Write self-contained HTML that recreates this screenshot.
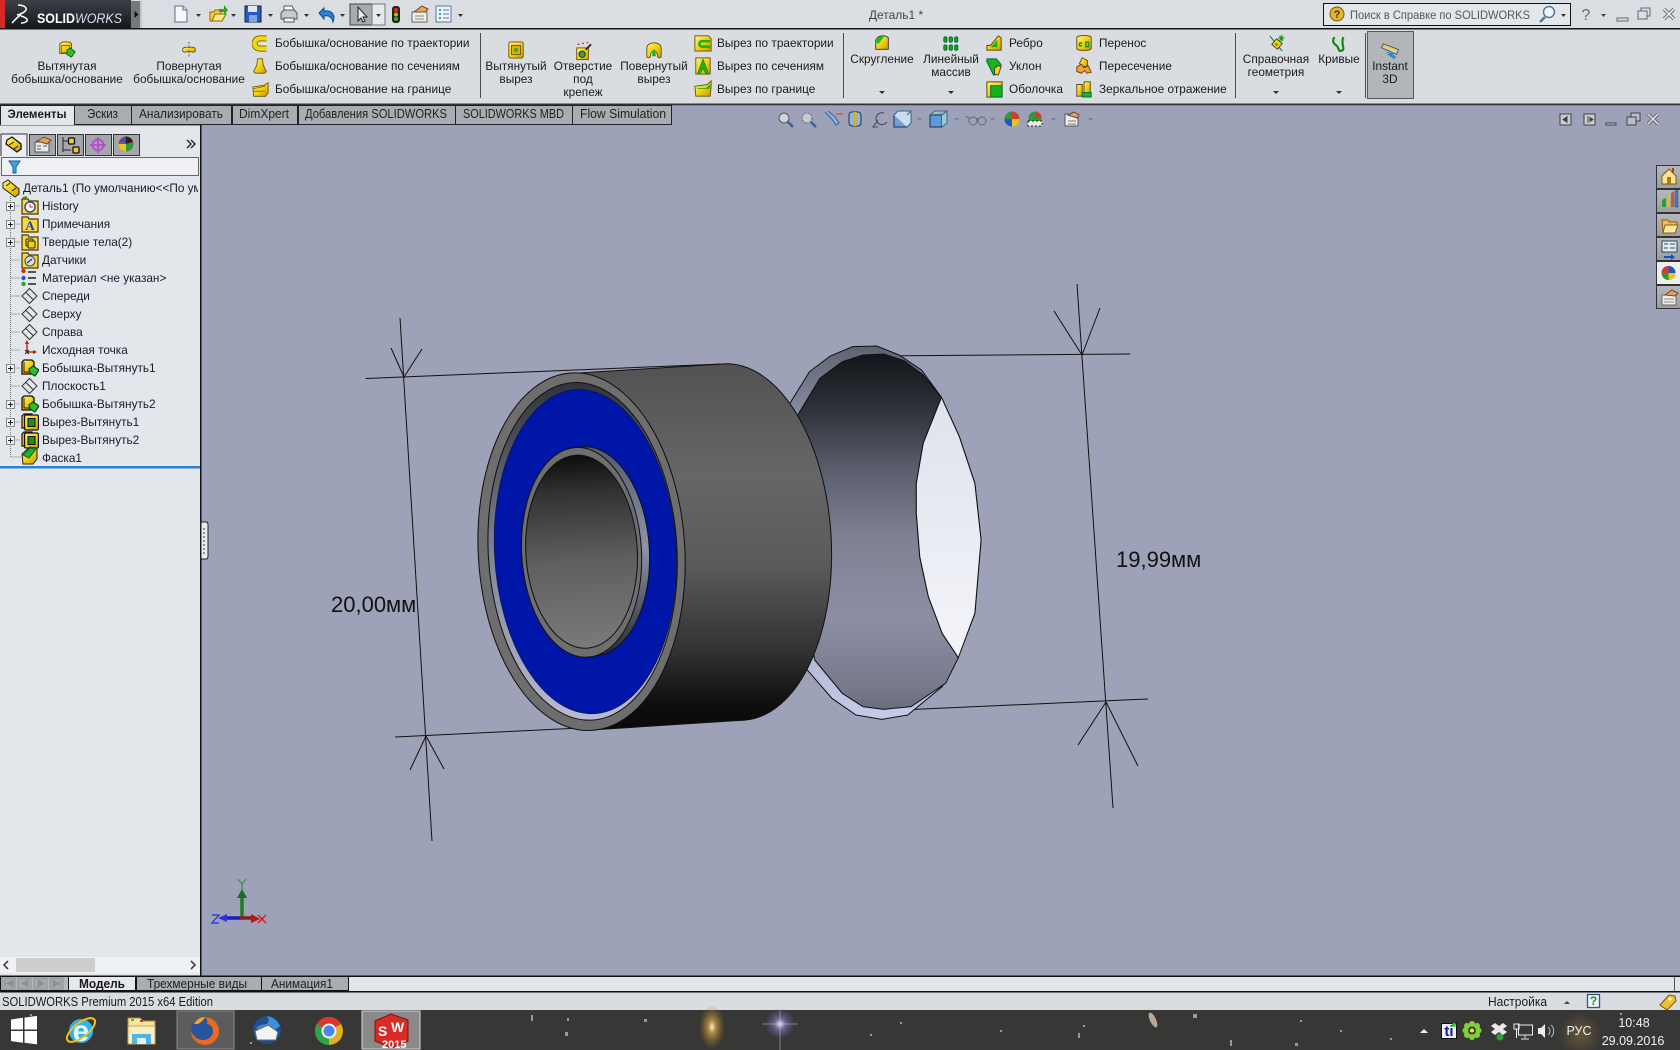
<!DOCTYPE html>
<html><head><meta charset="utf-8"><title>SOLIDWORKS</title>
<style>
html,body{margin:0;padding:0;background:#9da2b9;width:1680px;height:1050px;overflow:hidden}
svg{display:block;position:absolute;left:0;top:0}
text{font-family:"Liberation Sans","DejaVu Sans",sans-serif;font-size:12px;fill:#1a1a1a}
.m{text-anchor:middle}
.tab{font-size:12.5px;fill:#222}
.t{font-size:11.8px;fill:#1a1a2a}
.r{font-size:11.8px;letter-spacing:.03px}
.d{font-size:22px;fill:#111}
.w{fill:#f2f2f2}
.arr{fill:#333}
</style></head><body>
<svg width="1680" height="1050" viewBox="0 0 1680 1050" xmlns="http://www.w3.org/2000/svg">
<defs>
<clipPath id="sideclip"><rect x="0" y="176" width="198" height="300"/></clipPath>
<linearGradient id="logo" x1="0" y1="0" x2="0" y2="1"><stop offset="0" stop-color="#3c4148"/><stop offset="1" stop-color="#16181c"/></linearGradient>
<linearGradient id="yel" x1="0" y1="0" x2="1" y2="1"><stop offset="0" stop-color="#fff48a"/><stop offset=".5" stop-color="#f3d110"/><stop offset="1" stop-color="#c79a00"/></linearGradient>
<linearGradient id="body" x1="0" y1="0" x2="0" y2="1"><stop offset="0" stop-color="#525252"/><stop offset=".3" stop-color="#666"/><stop offset=".55" stop-color="#5a5a5a"/><stop offset=".78" stop-color="#333"/><stop offset=".93" stop-color="#0e0e0e"/><stop offset="1" stop-color="#0a0a0a"/></linearGradient>
<linearGradient id="rim" x1="0" y1="0" x2="0" y2="1"><stop offset="0" stop-color="#5f6370"/><stop offset=".2" stop-color="#8b90a6"/><stop offset=".7" stop-color="#a5aac4"/><stop offset="1" stop-color="#c6cce8"/></linearGradient>
<linearGradient id="inn" x1="0" y1="0" x2="0" y2="1"><stop offset="0" stop-color="#13151a"/><stop offset=".15" stop-color="#2e3038"/><stop offset=".33" stop-color="#5c5f6e"/><stop offset=".52" stop-color="#7f8294"/><stop offset=".75" stop-color="#8c8fa4"/><stop offset=".95" stop-color="#75788a"/><stop offset="1" stop-color="#6a6d7e"/></linearGradient>
<linearGradient id="wh" x1="0" y1="0" x2="0" y2="1"><stop offset="0" stop-color="#dfe2ed"/><stop offset="1" stop-color="#f4f5f9"/></linearGradient>
<linearGradient id="hole" x1="0" y1="0" x2="0" y2="1"><stop offset="0" stop-color="#0c0c0c"/><stop offset=".2" stop-color="#333"/><stop offset=".55" stop-color="#5f5f5f"/><stop offset="1" stop-color="#7a7a7a"/></linearGradient>
<linearGradient id="groove" x1="0" y1="0" x2="0" y2="1"><stop offset="0" stop-color="#32343c"/><stop offset=".5" stop-color="#808499"/><stop offset="1" stop-color="#b8bcd2"/></linearGradient>
<linearGradient id="tube" x1="0" y1="0" x2="0" y2="1"><stop offset="0" stop-color="#55586a"/><stop offset=".5" stop-color="#8f93aa"/><stop offset="1" stop-color="#2a2b33"/></linearGradient>
<radialGradient id="glow"><stop offset="0" stop-color="#a9824a" stop-opacity=".4"/><stop offset="1" stop-color="#a9824a" stop-opacity="0"/></radialGradient>
<radialGradient id="gold"><stop offset="0" stop-color="#fff6d0"/><stop offset=".3" stop-color="#c79a4a" stop-opacity=".8"/><stop offset="1" stop-color="#a07020" stop-opacity="0"/></radialGradient>
<radialGradient id="blu"><stop offset="0" stop-color="#f4eaf6"/><stop offset=".35" stop-color="#8f8cc0" stop-opacity=".6"/><stop offset="1" stop-color="#5050a0" stop-opacity="0"/></radialGradient>
<linearGradient id="btn" x1="0" y1="0" x2="0" y2="1"><stop offset="0" stop-color="#b5b8bd"/><stop offset="1" stop-color="#9a9da2"/></linearGradient>

<symbol id="yboss" viewBox="0 0 20 20"><path d="M2 3l3-2h8l2 2v11H2z" fill="url(#yel)" stroke="#6b5200"/><path d="M4 5h9v8H4z" fill="none" stroke="#8a6a00"/><path d="M10 10l4-2 5 4-4 6-5-3z" fill="#2cc12c" stroke="#0a5a0a"/></symbol>
<symbol id="yrev" viewBox="0 0 20 20"><path d="M10 0v20" stroke="#222" stroke-dasharray="2 2"/><path d="M2 10c0-4 5-4 8-3 3-1 8-1 8 3s-5 3-8 1c-3 2-8 3-8-1z" fill="url(#yel)" stroke="#5b4500"/></symbol>
<symbol id="ysweep" viewBox="0 0 20 20"><path d="M17 4H9a6 6 0 0 0 0 12h8" fill="none" stroke="#7a5d00" stroke-width="7"/><path d="M17 4H9a6 6 0 0 0 0 12h8" fill="none" stroke="#f5d514" stroke-width="5"/><path d="M17 9H10v2h7" fill="#fff7a0"/></symbol>
<symbol id="yloft" viewBox="0 0 20 20"><path d="M7 1h6l1 8 4 8-2 2H4l-2-2 4-8z" fill="url(#yel)" stroke="#6b5200"/></symbol>
<symbol id="ybound" viewBox="0 0 20 20"><path d="M1 7l13-2 5-3v12l-3 4H2z" fill="url(#yel)" stroke="#6b5200"/><path d="M2 9l14-3M2 12h14" stroke="#8a6a00" fill="none"/></symbol>
<symbol id="ycut" viewBox="0 0 20 20"><rect x="2" y="1" width="16" height="18" rx="2" fill="url(#yel)" stroke="#6b5200"/><rect x="5" y="5" width="10" height="10" fill="#e0b200" stroke="#6b5200"/><rect x="8" y="8" width="4" height="4" fill="#2ca82c"/></symbol>
<symbol id="yhole" viewBox="0 0 20 20"><rect x="3" y="6" width="13" height="13" fill="url(#yel)" stroke="#6b5200"/><circle cx="9" cy="13" r="3.5" fill="#3f9e3f" stroke="#222"/><path d="M13 8l6-6" stroke="#222" stroke-width="2"/><path d="M4 2h2M9 1h2M14 0h2" stroke="#d22" stroke-width="1.5"/></symbol>
<symbol id="yrcut" viewBox="0 0 20 20"><path d="M2 8c0-8 16-8 16 0v9c0 2-4 2-4 0 0-8-8-8-8 0 0 2-4 2-4 0z" fill="url(#yel)" stroke="#6b5200"/><path d="M8 17c0-5 1-8 2-8s2 3 2 8z" fill="#1db31d"/></symbol>
<symbol id="ycsw" viewBox="0 0 20 20"><path d="M1 2h15l3 3v14H1z" fill="url(#yel)" stroke="#6b5200"/><path d="M18 8h-9a3 3 0 0 0 0 6h9" fill="none" stroke="#1db31d" stroke-width="3"/></symbol>
<symbol id="yclo" viewBox="0 0 20 20"><rect x="2" y="1" width="16" height="18" fill="url(#yel)" stroke="#6b5200"/><path d="M10 2l3 8 3 8h-3l-3-5-3 5H4l3-8z" fill="#1db31d" stroke="#0a5a0a" stroke-width=".5"/></symbol>
<symbol id="ycb" viewBox="0 0 20 20"><path d="M1 7l14-2 4-4v6l-1 11H2z" fill="url(#yel)" stroke="#6b5200"/><path d="M3 9l10 0 6-5-2 6H5z" fill="#1db31d"/></symbol>
<symbol id="fil" viewBox="0 0 20 20"><path d="M3 7c2-5 9-7 14-3v13H3z" fill="url(#yel)" stroke="#333"/><path d="M3 9c2-5 6-8 10-7l-7 9z" fill="#1dbb1d"/></symbol>
<symbol id="pat" viewBox="0 0 20 20"><g fill="#18a418" stroke="#063"><rect x="2" y="2" width="3.6" height="6" rx="1.6"/><rect x="8" y="2" width="3.6" height="6" rx="1.6"/><rect x="14" y="2" width="3.6" height="6" rx="1.6"/><rect x="2" y="11" width="3.6" height="6" rx="1.6"/><rect x="8" y="11" width="3.6" height="6" rx="1.6"/><rect x="14" y="11" width="3.6" height="6" rx="1.6"/></g></symbol>
<symbol id="rib" viewBox="0 0 20 20"><path d="M2 18V13h4l8-10 3 2v13z" fill="url(#yel)" stroke="#5b4500"/><path d="M6 15l7-8v8z" fill="#1db31d"/></symbol>
<symbol id="dra" viewBox="0 0 20 20"><path d="M2 2h10l5 6-3 10-5 1-7-14z" fill="#18b418" stroke="#064"/><path d="M10 12l4-3 3 1-3 9-4-1z" fill="#f3d110" stroke="#444"/></symbol>
<symbol id="she" viewBox="0 0 20 20"><rect x="2" y="2" width="16" height="16" fill="url(#yel)" stroke="#5b4500"/><rect x="6" y="6" width="12" height="12" fill="#12b312" stroke="#064"/></symbol>
<symbol id="mov" viewBox="0 0 20 20"><path d="M2 4c0-3 16-3 16 0v12c0 3-16 3-16 0z" fill="url(#yel)" stroke="#5b4500"/><path d="M5 10h3M5 10v3h3M12 9v5h3V9z" fill="none" stroke="#0c9a0c" stroke-width="1.6"/></symbol>
<symbol id="ins" viewBox="0 0 20 20"><path d="M8 1l6 3v6l-6 1-3-4z" fill="url(#yel)" stroke="#5b4500"/><path d="M2 11l5-3 3 4 5-2 3 7-5 1-2-3-4 3-5-2z" fill="#f0a23a" stroke="#7a3b00"/></symbol>
<symbol id="mir" viewBox="0 0 20 20"><path d="M2 5h6v13H2z" fill="url(#yel)" stroke="#5b4500"/><path d="M10 2h7v13h-7z" fill="url(#yel)" stroke="#5b4500"/><path d="M8 14h10v5H8z" fill="#18b418" stroke="#064"/></symbol>
<symbol id="ref" viewBox="0 0 20 20"><path d="M3 2l13 16" stroke="#0a7a0a"/><path d="M10 5l6 5-5 6-6-5z" fill="#f3d110" stroke="#444"/><circle cx="10" cy="11" r="1.4" fill="#3a3"/><path d="M15 1v7M11.5 4.500h7M13 2l4 5M17 2l-4 5" stroke="#0f9a0f"/></symbol>
<symbol id="cur" viewBox="0 0 20 20"><path d="M5 3c-4 6 1 8 3 10 2 3 1 6 5 5 5-2-2-8 2-15" fill="none" stroke="#0c8a0c" stroke-width="2.4"/></symbol>
<symbol id="i3d" viewBox="0 0 20 20"><path d="M3 2l16 6-2 5L1 6z" fill="#e0d080" stroke="#555"/><path d="M5 10l10 6-2-4zM6 12l8 6 3-3z" fill="#2a88dd"/></symbol>

<symbol id="plane" viewBox="0 0 18 18"><path d="M8.500 1.500l7.500 7.500-7.500 7.500L1 9z" fill="none" stroke="#333"/><path d="M5 5.500l7.500 7.500" stroke="#333" fill="none"/></symbol>
<symbol id="fold" viewBox="0 0 18 18"><path d="M1 2h6l1 2h9v13H1z" fill="#f9d743" stroke="#4b3a00" stroke-width="1.200"/></symbol>
<symbol id="feat" viewBox="0 0 18 18"><path d="M1 3l2-2h8l2 2v12H1z" fill="url(#yel)" stroke="#111" stroke-width="1.300"/><path d="M3 3v10h9" fill="none" stroke="#111"/><path d="M8 10l4-3 6 4-4 6-5-3z" fill="#2cc12c" stroke="#042" stroke-width="1.200"/></symbol>
<symbol id="fcut" viewBox="0 0 18 18"><path d="M1 3l2-2h8v14H1z" fill="#f3d110" stroke="#111" stroke-width="1.200"/><rect x="3.500" y="2" width="14" height="15" rx="1.500" fill="url(#yel)" stroke="#111" stroke-width="1.300"/><rect x="7" y="5.500" width="7" height="8" fill="#1a8f1a" stroke="#111"/></symbol>
</defs>

<!-- viewport -->
<rect width="1680" height="1050" fill="#9da2b9"/>

<!-- title bar -->
<rect x="0" y="0" width="1680" height="28" fill="#dadde2"/>
<rect x="0" y="0" width="131" height="28" fill="url(#logo)"/>
<rect x="0" y="0" width="5" height="28" fill="#d6282b"/>
<rect x="131" y="1" width="9" height="27" fill="#75787c"/>
<rect x="140" y="1" width="2" height="27" fill="#c4c7cc"/>
<path d="M134.500 11l4 3.500-4 3.500z" fill="#111"/>
<path d="M18 5c5 0 9 2 8 5-1 2-5 4-9 5M12 23c3-3 6-7 9-8M21 16c4 1 7 3 6 5-1 1-3 2-6 2" fill="none" stroke="#fff" stroke-width="1.500"/>
<text x="37" y="23" textLength="85" lengthAdjust="spacingAndGlyphs" style="font-size:13.500px;font-weight:bold;fill:#fff;">SOLID<tspan style="font-weight:normal;font-style:italic;fill:#dde">WORKS</tspan></text>
<rect x="0" y="28" width="1680" height="1.500" fill="#141414"/>

<!-- quick access -->
<path d="M175 6h8l4 4v12h-12z" fill="#f4f8fd" stroke="#58708a"/><path d="M183 6v4h4" fill="#cfe0f0" stroke="#58708a"/>
<path d="M210 12h4l1-2h6v11h-11z" fill="#f2c94c" stroke="#8a6a00"/><path d="M212 21l3-7h11l-4 7z" fill="#ffe680" stroke="#8a6a00"/><path d="M219 9h5V5l4 5-4 5v-3h-5z" fill="#2aa52a"/>
<rect x="245" y="6" width="16" height="16" fill="#2859c5" stroke="#123"/><rect x="248" y="6" width="9" height="6" fill="#dfe9f7"/><rect x="249" y="15" width="8" height="7" fill="#7da3de"/>
<path d="M281 13l3-3h10l3 3v6h-16z" fill="#c9c9c9" stroke="#555"/><path d="M284 10V6h8l2 4z" fill="#fff" stroke="#555"/><path d="M284 18h10v4h-10z" fill="#f4f4f4" stroke="#555"/>
<path d="M319 13l5-5v3c7-1 12 3 9 11-1-5-4-7-9-6v3z" fill="#2a82da" stroke="#164b90"/>
<rect x="350" y="4" width="22" height="21" fill="#a7aaae" stroke="#444"/><rect x="372" y="4" width="13" height="21" fill="#e6e8ec" stroke="#777"/>
<path d="M358 7v14l3-3 2 4 2-1-2-4h4z" fill="#e8e8e8" stroke="#222"/>
<rect x="392" y="6" width="8" height="17" rx="3" fill="#222"/><circle cx="396" cy="10" r="2" fill="#e22"/><circle cx="396" cy="14.500" r="2" fill="#da0"/><circle cx="396" cy="19" r="2" fill="#2b2"/>
<path d="M412 12h15v10h-15z" fill="#f1efe6" stroke="#666"/><path d="M414 12l8-6 6 3-3 3z" fill="#e5a66b" stroke="#7a4a20"/><path d="M415 16h9M415 19h9" stroke="#888"/>
<rect x="436" y="6" width="15" height="16" fill="#eef3fa" stroke="#5b7aa0"/><path d="M439 10h2M439 14h2M439 18h2" stroke="#2a9" stroke-width="2"/><path d="M443 10h6M443 14h6M443 18h6" stroke="#5b7aa0"/>
<g class="arr"><path d="M196 14l5 0-2.500 3zM231 14l5 0-2.500 3zM268 14l5 0-2.500 3zM304 14l5 0-2.500 3zM340 14l5 0-2.500 3zM376 14l5 0-2.500 3zM458 14l5 0-2.500 3z"/></g>

<text class="m" x="896" y="19" style="fill:#444;font-size:12px">Деталь1 *</text>

<!-- search -->
<rect x="1323.500" y="3.500" width="247" height="22" fill="#e3e6ea" stroke="#111"/>
<circle cx="1337" cy="14" r="7" fill="#e9b32c" stroke="#7a5a00"/><text class="m" x="1337" y="18" style="font-size:11px;font-weight:bold;fill:#333">?</text>
<text x="1350" y="19" textLength="180" lengthAdjust="spacingAndGlyphs" style="font-size:12px;fill:#55585c">Поиск в Справке по SOLIDWORKS</text>
<circle cx="1549" cy="12" r="5.500" fill="#eef4fb" stroke="#55789a" stroke-width="1.500"/><path d="M1545 17l-5 5" stroke="#55789a" stroke-width="2.500"/>
<path d="M1561 14h5l-2.500 3z" fill="#333"/>
<text class="m" x="1586" y="20" style="font-size:16px;fill:#666">?</text><path d="M1601 14h5l-2.500 3z" fill="#444"/>
<rect x="1617" y="18" width="11" height="3" fill="#dde" stroke="#666"/>
<rect x="1641" y="8" width="9" height="8" fill="#dde" stroke="#666"/><rect x="1638" y="11" width="9" height="8" fill="#dde" stroke="#666"/>
<path d="M1664 9l10 10M1674 9l-10 10" stroke="#666" stroke-width="3.500"/><path d="M1664 9l10 10M1674 9l-10 10" stroke="#e6e8ec" stroke-width="1.600"/>

<!-- ribbon -->
<rect x="0" y="29.500" width="1680" height="74.500" fill="#d9dce1"/>
<rect x="0" y="103.500" width="1680" height="2" fill="#333"/>
<rect x="0" y="105" width="1680" height="1" fill="#888"/>
<g fill="#4a4c50"><rect x="480" y="33" width="1" height="65"/><rect x="843" y="33" width="1" height="65"/><rect x="1235" y="33" width="1" height="65"/><rect x="1365" y="33" width="1" height="65"/></g>
<rect x="1367.500" y="31.500" width="46" height="67" fill="#b2b5ba" stroke="#55585c"/>

<use href="#yboss" x="58" y="41" width="18" height="18"/>
<use href="#yrev" x="180" y="42" width="18" height="16"/>
<use href="#ysweep" x="252" y="35" width="17" height="17"/>
<use href="#yloft" x="252" y="58" width="16" height="16"/>
<use href="#ybound" x="252" y="81" width="17" height="17"/>
<use href="#ycut" x="507" y="41" width="18" height="18"/>
<use href="#yhole" x="574" y="42" width="18" height="19"/>
<use href="#yrcut" x="645" y="41" width="18" height="18"/>
<use href="#ycsw" x="694" y="34" width="18" height="18"/>
<use href="#yclo" x="694" y="57" width="18" height="18"/>
<use href="#ycb" x="694" y="80" width="18" height="18"/>
<use href="#fil" x="873" y="34" width="18" height="18"/>
<use href="#pat" x="942" y="35" width="18" height="18"/>
<use href="#rib" x="985" y="33" width="19" height="19"/>
<use href="#dra" x="985" y="57" width="19" height="19"/>
<use href="#she" x="985" y="80" width="19" height="19"/>
<use href="#mov" x="1075" y="34" width="18" height="18"/>
<use href="#ins" x="1075" y="57" width="18" height="18"/>
<use href="#mir" x="1075" y="80" width="18" height="18"/>
<use href="#ref" x="1267" y="34" width="19" height="19"/>
<use href="#cur" x="1330" y="34" width="18" height="19"/>
<use href="#i3d" x="1380" y="42" width="20" height="19"/>

<g>
<text class="m r" x="67" y="70">Вытянутая</text><text class="m r" x="67" y="83">бобышка/основание</text>
<text class="m r" x="189" y="70">Повернутая</text><text class="m r" x="189" y="83">бобышка/основание</text>
<text class="r" x="275" y="47">Бобышка/основание по траектории</text>
<text class="r" x="275" y="70">Бобышка/основание по сечениям</text>
<text class="r" x="275" y="93">Бобышка/основание на границе</text>
<text class="m r" x="516" y="70">Вытянутый</text><text class="m r" x="516" y="83">вырез</text>
<text class="m r" x="583" y="70">Отверстие</text><text class="m r" x="583" y="83">под</text><text class="m r" x="583" y="96">крепеж</text>
<text class="m r" x="654" y="70">Повернутый</text><text class="m r" x="654" y="83">вырез</text>
<text class="r" x="717" y="47">Вырез по траектории</text>
<text class="r" x="717" y="70">Вырез по сечениям</text>
<text class="r" x="717" y="93">Вырез по границе</text>
<text class="m r" x="882" y="63">Скругление</text>
<text class="m r" x="951" y="63">Линейный</text><text class="m r" x="951" y="76">массив</text>
<text class="r" x="1009" y="47">Ребро</text><text class="r" x="1009" y="70">Уклон</text><text class="r" x="1009" y="93">Оболочка</text>
<text class="r" x="1099" y="47">Перенос</text><text class="r" x="1099" y="70">Пересечение</text><text class="r" x="1099" y="93">Зеркальное отражение</text>
<text class="m r" x="1276" y="63">Справочная</text><text class="m r" x="1276" y="76">геометрия</text>
<text class="m r" x="1339" y="63">Кривые</text>
<text class="m r" x="1390" y="70">Instant</text><text class="m r" x="1390" y="83">3D</text>
</g>
<path d="M879 91h6l-3 3zM948 91h6l-3 3zM1273 91h6l-3 3zM1336 91h6l-3 3z" fill="#333"/>

<!-- tab strip -->
<rect x="0" y="105" width="672" height="20" fill="#a9acb1"/>
<g fill="#a9acb1" stroke="#222">
<rect x="74.500" y="105.500" width="57" height="19"/><rect x="131.500" y="105.500" width="100" height="19"/><rect x="232.500" y="105.500" width="65" height="19"/><rect x="298.500" y="105.500" width="157" height="19"/><rect x="455.500" y="105.500" width="117" height="19"/><rect x="572.500" y="105.500" width="99" height="19"/>
</g>
<rect x="0.500" y="105.500" width="74" height="21" fill="#e3e6eb" stroke="#222"/>
<text x="7.500" y="118" textLength="59" lengthAdjust="spacingAndGlyphs" style="font-weight:bold;font-size:12px">Элементы</text>
<text class="tab" x="87" y="118" textLength="31" lengthAdjust="spacingAndGlyphs">Эскиз</text>
<text class="tab" x="139" y="118" textLength="84" lengthAdjust="spacingAndGlyphs">Анализировать</text>
<text class="tab" x="239" y="118" textLength="50" lengthAdjust="spacingAndGlyphs">DimXpert</text>
<text class="tab" x="305" y="118" textLength="142" lengthAdjust="spacingAndGlyphs">Добавления SOLIDWORKS</text>
<text class="tab" x="463" y="118" textLength="101" lengthAdjust="spacingAndGlyphs">SOLIDWORKS MBD</text>
<text class="tab" x="580" y="118" textLength="86" lengthAdjust="spacingAndGlyphs">Flow Simulation</text>

<!-- heads-up toolbar -->
<g fill="none" stroke="#3a5f90">
<circle cx="784" cy="118" r="5" fill="#cdd4e0" stroke="#555"/><path d="M788 122l5 5" stroke-width="2.500"/>
<circle cx="807" cy="118" r="5" fill="#c4c9d4" stroke="#666" stroke-dasharray="2 1"/><path d="M811 122l5 5" stroke-width="2.500"/>
<path d="M825 112l7 7 4 6 3-2-4-6-7-6" fill="#8fb8e6"/><path d="M836 114h7" stroke="#d33"/>
<rect x="849" y="112" width="12" height="14" rx="3" fill="#8cb4de" stroke="#234"/><path d="M855 112v14" stroke="#d9b40c" stroke-width="3"/>
<path d="M878 120l-5 7h5M884 113a6 6 0 1 0 3 9" stroke="#445"/>
<rect x="894" y="115" width="13" height="12" fill="#6ea1db" stroke="#234"/><path d="M894 115l4-4h13v12l-4 4M907 115l4-4" fill="#cde"/>
<rect x="930" y="115" width="12" height="12" fill="#5c9ad8" stroke="#234"/><path d="M942 115l5-4v12l-5 4M930 115l5-4h12" fill="#9cc"/>
<circle cx="973" cy="121" r="4" stroke="#667"/><circle cx="982" cy="121" r="4" stroke="#667"/><path d="M977 119l1-1M966 116l4 3" stroke="#667"/>
</g>
<circle cx="1012" cy="119" r="7.500" fill="#2e9a3a"/><path d="M1012 119v-7.500a7.500 7.500 0 0 1 7.500 7.500z" fill="#d83b2a"/><path d="M1012 119h7.500a7.500 7.500 0 0 1-7.500 7.500z" fill="#e8c71c"/><path d="M1012 119h-7.500a7.500 7.500 0 0 0 7.500 7.500z" fill="#2255cc"/>
<circle cx="1035" cy="118" r="6.500" fill="#2e9a3a"/><path d="M1035 118v-6.500a6.500 6.500 0 0 1 6.500 6.500z" fill="#d83b2a"/><path d="M1028 121h14v5h-14z" fill="#eee" stroke="#222" stroke-dasharray="2 2"/>
<path d="M1065 114h13v12h-13z" fill="#eee" stroke="#555"/><path d="M1068 115l6-3 5 3-2 3z" fill="#e0a070" stroke="#7a4a20"/><path d="M1068 121h8M1068 124h8" stroke="#777"/>
<path d="M917 118h5l-2.500 3zM954 118h5l-2.500 3zM990 118h5l-2.500 3zM1051 118h5l-2.500 3zM1088 118h5l-2.500 3z" fill="#7c8094"/>

<!-- viewport window buttons -->
<g fill="none" stroke="#444">
<rect x="1560" y="114" width="11" height="11" fill="#c9ccd2"/><path d="M1567 116v7M1563 119.500l3-2v4z" fill="#333"/>
<rect x="1584" y="114" width="11" height="11" fill="#c9ccd2"/><path d="M1588 116v7M1593 119.500l-3-2v4z" fill="#333"/>
<rect x="1606" y="123" width="10" height="2" fill="#ccd"/>
<rect x="1631" y="113" width="9" height="8" fill="#b8bccb"/><rect x="1627" y="117" width="9" height="8" fill="#b8bccb"/>
<path d="M1648 114l10 10M1658 114l-10 10" stroke="#666" stroke-width="3.500"/><path d="M1648 114l10 10M1658 114l-10 10" stroke="#d8dae5" stroke-width="1.600"/>
</g>

<!-- task pane -->
<g fill="url(#btn)" stroke="#333">
<rect x="1656.500" y="165.500" width="24" height="23"/><rect x="1656.500" y="189.500" width="24" height="23"/><rect x="1656.500" y="213.500" width="24" height="23"/><rect x="1656.500" y="237.500" width="24" height="23"/><rect x="1656.500" y="285.500" width="24" height="23"/>
</g>
<rect x="1656.500" y="261.500" width="24" height="23" fill="#eceef1" stroke="#333"/>
<path d="M1662 176l7-7 7 7v8h-14z" fill="#f8e59a" stroke="#7a5d00"/><rect x="1667" y="177" width="4" height="7" fill="#b77a00"/><rect x="1672" y="168" width="2" height="4" fill="#b33"/>
<path d="M1662 200l4-2v9h-4z" fill="#2a9d2a"/><path d="M1667 196l3-2v13h-3z" fill="#d8c020"/><path d="M1671 193l3-2v16h-3z" fill="#c53"/><path d="M1675 191l3-2v18h-3z" fill="#4a80d0" stroke="#234" stroke-width=".5"/>
<path d="M1662 220h6l1 2h8l-2 11h-12z" fill="#f0c050" stroke="#8a5d00"/><path d="M1663 233l2-8h13l-3 8z" fill="#ffe9a8" stroke="#8a5d00"/>
<rect x="1662" y="241" width="15" height="11" fill="#dfe8f5" stroke="#345"/><path d="M1664 244h4M1664 248h4M1670 244h5M1670 248h5" stroke="#356"/><path d="M1664 256h7v-2l4 3-4 3v-2h-7z" fill="#1b4fc9"/>
<circle cx="1668.500" cy="273" r="7" fill="#2e9a3a"/><path d="M1668.500 273v-7a7 7 0 0 1 7 7z" fill="#2255cc"/><path d="M1668.500 273h7a7 7 0 0 1-7 7z" fill="#e8c71c"/><path d="M1668.500 273h-7a7 7 0 0 1 7-7z" fill="#d83b2a"/>
<path d="M1662 295h14v10h-14z" fill="#eee" stroke="#666"/><path d="M1665 295l7-5 6 3-3 3z" fill="#dd9f66" stroke="#7a4a20"/><path d="M1664 299h10M1664 302h10" stroke="#888"/>

<!-- sidebar -->
<rect x="0" y="125" width="200" height="851" fill="#e3e6eb"/>
<rect x="200" y="125" width="1.500" height="851" fill="#141414"/>
<rect x="0" y="125" width="200" height="1" fill="#999"/>
<g fill="#a4a7ac" stroke="#333">
<rect x="29.500" y="134.500" width="26" height="21"/><rect x="57.500" y="134.500" width="26" height="21"/><rect x="85.500" y="134.500" width="26" height="21"/><rect x="113.500" y="134.500" width="26" height="21"/>
</g>
<path d="M1 156v-22h26v22" fill="#eceef1" stroke="#333"/>
<path d="M7 140l5-3 9 7v5l-4 3-11-8z" fill="url(#yel)" stroke="#111" stroke-width="1.300"/><path d="M9 145l5-3M14 149l4-3" stroke="#111"/>
<rect x="35" y="142" width="14" height="10" fill="#e8e8e8" stroke="#555"/><path d="M37 141l7-4 7 3-4 4z" fill="#dd9f66" stroke="#7a4a20"/><path d="M37 146h4M37 149h4M43 146h4" stroke="#2a6fb0"/>
<path d="M63 137v15M63 141h6M63 150h8" stroke="#222" fill="none"/>
<rect x="68.500" y="138" width="6" height="6" rx="1" fill="#f0c930" stroke="#111" stroke-width="1.300"/><rect x="73" y="147" width="6" height="6" rx="1" fill="#f0c930" stroke="#111" stroke-width="1.300"/>
<circle cx="98" cy="145" r="5.500" fill="none" stroke="#b34ccf" stroke-width="1.800"/><path d="M98 137v16M90 145h16" stroke="#b34ccf" stroke-width="1.800"/>
<circle cx="126" cy="144" r="7.500" fill="#d83b2a"/><path d="M126 144h-7.500a7.500 7.500 0 0 0 7.500 7.500z" fill="#e8c71c"/><path d="M126 144h7.500a7.500 7.500 0 0 1-7.500 7.500z" fill="#2e9a3a"/><path d="M126 144v-7.500a7.500 7.500 0 0 1 7 5z" fill="#222"/><path d="M119 141l7-5v8z" fill="#2255cc"/>
<path d="M187 140l4 4-4 4M191 140l4 4-4 4" fill="none" stroke="#222" stroke-width="1.400"/>
<rect x="1.500" y="157.500" width="197" height="18" fill="#eef0f3" stroke="#666"/>
<path d="M9 161h11l-4 6v6h-3v-6z" fill="#3ea3e4" stroke="#1c5f9a"/>

<!-- tree -->
<path d="M10.500 196v261h10M10.500 206h10M10.500 224h10M10.500 242h10M10.500 260h10M10.500 278h10M10.500 296h10M10.500 314h10M10.500 332h10M10.500 350h10M10.500 368h10M10.500 386h10M10.500 404h10M10.500 422h10M10.500 440h10" fill="none" stroke="#777" stroke-dasharray="1 1"/>
<g fill="#eef0f3" stroke="#888"><rect x="6.500" y="202.500" width="8" height="8"/><rect x="6.500" y="220.500" width="8" height="8"/><rect x="6.500" y="238.500" width="8" height="8"/><rect x="6.500" y="364.500" width="8" height="8"/><rect x="6.500" y="400.500" width="8" height="8"/><rect x="6.500" y="418.500" width="8" height="8"/><rect x="6.500" y="436.500" width="8" height="8"/></g>
<path d="M8 206.500h5M10.500 204v5M8 224.500h5M10.500 222v5M8 242.500h5M10.500 240v5M8 368.500h5M10.500 366v5M8 404.500h5M10.500 402v5M8 422.500h5M10.500 420v5M8 440.500h5M10.500 438v5" stroke="#223"/>
<path d="M3 183l5-3 11 9v5l-4 3-12-9z" fill="url(#yel)" stroke="#222"/><path d="M6 186l4-3M12 191l4-3" stroke="#222"/>
<use href="#fold" x="21" y="197" width="18" height="18"/><circle cx="30" cy="207" r="5" fill="#fff" stroke="#2d4fa0" stroke-width="1.500"/><path d="M30 204v3h3" stroke="#c22" fill="none"/><path d="M23 198l4-1" stroke="#2aa52a" stroke-width="2"/>
<use href="#fold" x="21" y="215" width="18" height="18"/><text class="m" x="30" y="230" style="font:bold 13px 'Liberation Serif',serif;fill:#1b3fae">A</text>
<use href="#fold" x="21" y="233" width="18" height="18"/><rect x="26" y="239" width="7" height="7" rx="1" fill="#f3d110" stroke="#222"/><rect x="28" y="241" width="7" height="7" rx="1" fill="#f3d110" stroke="#222"/>
<use href="#fold" x="21" y="251" width="18" height="18"/><circle cx="30" cy="261" r="5" fill="#ddd" stroke="#445"/><path d="M27 263l5-4" stroke="#245" stroke-width="1.400"/>
<circle cx="23.500" cy="271" r="2.200" fill="#d22"/><circle cx="23.500" cy="278" r="2.200" fill="#2255cc"/><circle cx="23.500" cy="284" r="2.200" fill="#2a2"/><path d="M28 272h8M28 278h8M28 284h8" stroke="#222" stroke-width="1.500"/>
<use href="#plane" x="21" y="287" width="18" height="18"/>
<use href="#plane" x="21" y="305" width="18" height="18"/>
<use href="#plane" x="21" y="323" width="18" height="18"/>
<path d="M27 353V342M27 352h9" stroke="#b21b1b" stroke-width="1.300" fill="none"/><path d="M27 340l-2 4h4zM37 352l-4-2v4z" fill="#b21b1b"/><path d="M25 350l4 4M29 350l-4 4" stroke="#222"/>
<use href="#feat" x="21" y="359" width="18" height="18"/>
<use href="#plane" x="21" y="377" width="18" height="18"/>
<use href="#feat" x="21" y="395" width="18" height="18"/>
<use href="#fcut" x="21" y="413" width="18" height="18"/>
<use href="#fcut" x="21" y="431" width="18" height="18"/>
<path d="M22 454l8-7 7 1v11l-4 5H23z" fill="url(#yel)" stroke="#222"/><path d="M23 455l7-7 6 1-7 9z" fill="#21b221" stroke="#063"/>
<g clip-path="url(#sideclip)"><text class="t" x="23" y="192">Деталь1  (По умолчанию&lt;&lt;По умолчанию</text></g>
<text class="t" x="42" y="210">History</text>
<text class="t" x="42" y="228">Примечания</text>
<text class="t" x="42" y="246">Твердые тела(2)</text>
<text class="t" x="42" y="264">Датчики</text>
<text class="t" x="42" y="282">Материал &lt;не указан&gt;</text>
<text class="t" x="42" y="300">Спереди</text>
<text class="t" x="42" y="318">Сверху</text>
<text class="t" x="42" y="336">Справа</text>
<text class="t" x="42" y="354">Исходная точка</text>
<text class="t" x="42" y="372">Бобышка-Вытянуть1</text>
<text class="t" x="42" y="390">Плоскость1</text>
<text class="t" x="42" y="408">Бобышка-Вытянуть2</text>
<text class="t" x="42" y="426">Вырез-Вытянуть1</text>
<text class="t" x="42" y="444">Вырез-Вытянуть2</text>
<text class="t" x="42" y="462">Фаска1</text>
<rect x="0" y="466" width="200" height="2.500" fill="#2f7fd0"/>
<!-- splitter -->
<path d="M201 522h6l1 2v33l-1 2h-6z" fill="#e9ebee" stroke="#222"/><path d="M204 528v26" stroke="#333" stroke-dasharray="2 2"/>
<!-- sidebar hscroll -->
<rect x="0" y="957" width="200" height="16" fill="#f0f1f2"/>
<rect x="16" y="958" width="79" height="14" fill="#cdcdcd"/>
<path d="M8 961l-4 4 4 4M191 961l4 4-4 4" fill="none" stroke="#444" stroke-width="1.600"/>

<!-- triad -->
<path d="M242 917V897" stroke="#1e7d1e" stroke-width="3.500"/><path d="M242 889l-5 9h10z" fill="#1b6e1b"/>
<path d="M242 918h-20" stroke="#1a1fb5" stroke-width="3.500"/><path d="M218 918l9-4v8z" fill="#2a32e0"/>
<path d="M240 918h14" stroke="#8e1a1a" stroke-width="3.500"/><path d="M260 919l-9-5v9z" fill="#b51515"/>
<path d="M238 879l4 5 4-5M242 884v6" stroke="#1a8f1a" fill="none"/>
<path d="M212 915h7l-7 8h7" stroke="#2430e0" fill="none" stroke-width="1.200"/>
<path d="M258 915l8 8M266 915l-8 8" stroke="#e01515" fill="none" stroke-width="1.300"/>

<!-- dimension lines -->
<g stroke="#111" stroke-width="1" fill="none">
<path d="M365.500 378.500L722 364"/>
<path d="M395 737L746 720"/>
<path d="M400 318L432 841"/>
<path d="M404 377L391 348M404 377L422 349"/>
<path d="M426 736L410 770M426 736L444 769"/>
<path d="M870 356L1130 354"/>
<path d="M900 710L1148 699"/>
<path d="M1077 284L1113 808"/>
<path d="M1082 355L1054 311M1082 355L1100 308"/>
<path d="M1106 702L1078 745M1106 702L1138 766"/>
</g>
<text class="d" x="331" y="612">20,00мм</text>
<text class="d" x="1116" y="567">19,99мм</text>

<!-- bearing -->
<g transform="translate(460,340) scale(.34439,.33333)">
<g stroke="#111" stroke-width="3">
<path d="M955 195L1015 95 1075 48 1140 20 1210 18 1275 45 1340 90 1398 172 1450 290 1495 430 1513 600 1495 820 1445 955 1400 1040 1300 1125 1225 1138 1150 1125 1080 1075 1000 980 960 600z" fill="url(#rim)"/>
<path d="M975 235L1045 115 1110 65 1170 45 1230 42 1290 62 1345 105 1398 172 1345 310 1325 430 1325 520 1335 650 1360 770 1400 880 1447 953 1410 1030 1310 1100 1230 1108 1170 1100 1110 1060 1030 960 1000 800z" fill="url(#inn)"/>
<path d="M1398 172L1450 290 1495 430 1513 600 1495 820 1447 953 1400 880 1360 770 1335 650 1325 520 1325 430 1345 310z" fill="url(#wh)"/>
<path d="M330 100L760 72A283 535 -3 0 1 830 1140L380 1170Z" fill="url(#body)"/>
<ellipse cx="353" cy="635" rx="300" ry="537" transform="rotate(-3 353 635)" fill="#6e6e6e"/>
<ellipse cx="356" cy="634" rx="274" ry="507" transform="rotate(-3 356 634)" fill="url(#groove)"/>
<ellipse cx="364" cy="635" rx="264" ry="487" transform="rotate(-3 364 635)" fill="#0016a8" stroke-width="1.500"/>
<ellipse cx="375" cy="634" rx="175" ry="314" transform="rotate(-3 375 634)" fill="url(#tube)"/>
<ellipse cx="353" cy="637" rx="174" ry="315" transform="rotate(-3 353 637)" fill="#6e6e6e"/>
<ellipse cx="353" cy="635" rx="162" ry="290" transform="rotate(-3 353 635)" fill="url(#hole)"/>
</g>
</g>

<!-- bottom tabs -->
<rect x="0" y="976" width="1680" height="15" fill="#e1e4e9"/>
<rect x="0" y="975.500" width="1680" height="1.500" fill="#111"/>
<rect x="0.500" y="976.500" width="68" height="14" fill="#b4b7bb" stroke="#111"/>
<path d="M2 978h13v11H2zM18 978h13v11H18zM34 978h13v11H34zM50 978h13v11H50z" fill="#a6a9ad" stroke="#8e9195"/>
<path d="M5 980v7M13 980l-6 3.500 6 3.500zM28 980l-6 3.500 6 3.500zM38 980l6 3.500-6 3.500zM53 980l6 3.500-6 3.500zM60 980v7" fill="#8c8f93" stroke="#8c8f93"/>
<rect x="68.500" y="976.500" width="67" height="14" fill="#e5e8ec" stroke="#111"/>
<rect x="136.500" y="976.500" width="125" height="14" fill="#a9acb1" stroke="#111"/>
<rect x="261.500" y="976.500" width="87" height="14" fill="#a9acb1" stroke="#111"/>
<text x="79" y="988" textLength="46" lengthAdjust="spacingAndGlyphs" style="font-weight:bold;font-size:12.500px">Модель</text>
<text class="tab" x="147" y="988" textLength="100" lengthAdjust="spacingAndGlyphs">Трехмерные виды</text>
<text class="tab" x="271" y="988" textLength="62" lengthAdjust="spacingAndGlyphs">Анимация1</text>
<rect x="1674" y="977" width="1" height="14" fill="#555"/>
<!-- status -->
<rect x="0" y="991" width="1680" height="1.500" fill="#111"/>
<rect x="0" y="992.500" width="1680" height="17.500" fill="#d9dce1"/>
<text x="2" y="1006" textLength="211" lengthAdjust="spacingAndGlyphs" style="font-size:12.500px">SOLIDWORKS Premium 2015 x64 Edition</text>
<text x="1488" y="1006" textLength="59" lengthAdjust="spacingAndGlyphs" style="font-size:12.500px">Настройка</text>
<path d="M1564 1004h6l-3-3z" fill="#444"/>
<rect x="1587.500" y="994.500" width="12" height="13" fill="#eef2f6" stroke="#2a5a8a" stroke-width="1.300"/>
<text class="m" x="1593.500" y="1005" style="font-size:12px;font-weight:bold;fill:#139a13">?</text>
<path d="M1660 1005l9-10 6 1 1 5-9 9z" fill="#ecc130" stroke="#7a5400"/><circle cx="1670" cy="999" r="1.500" fill="#fff"/>

<!-- taskbar -->
<rect x="0" y="1010" width="1680" height="40" fill="#373735"/>
<ellipse cx="712" cy="1027" rx="13" ry="22" fill="url(#gold)"/>
<circle cx="780" cy="1024" r="16" fill="url(#blu)"/><path d="M780 1010v40M762 1024h36" stroke="#c8c4e0" stroke-width="1" opacity=".5"/>
<ellipse cx="1153" cy="1020" rx="3" ry="8" transform="rotate(-25 1153 1020)" fill="#b9a99a"/>
<g fill="#9a9a98">
<rect x="531" y="1015" width="2" height="6"/><rect x="567" y="1018" width="2" height="3"/><rect x="565" y="1032" width="3" height="4"/><rect x="644" y="1019" width="3" height="3"/><rect x="1193" y="1014" width="4" height="4"/><rect x="1078" y="1033" width="2" height="5"/><rect x="1083" y="1025" width="2" height="2"/><rect x="900" y="1022" width="2" height="2"/><rect x="870" y="1034" width="2" height="2"/><rect x="1230" y="1040" width="2" height="6"/><rect x="1295" y="1043" width="3" height="3"/><rect x="1340" y="1030" width="2" height="2"/><rect x="1390" y="1038" width="2" height="2"/><rect x="30" y="1014" width="2" height="2"/><rect x="250" y="1042" width="2" height="2"/><rect x="1000" y="1030" width="2" height="2"/><rect x="1300" y="1020" width="2" height="2"/><rect x="1620" y="1013" width="2" height="2"/>
</g>
<circle cx="1580" cy="1034" r="22" fill="url(#glow)"/>
<rect x="177" y="1011" width="57" height="38" fill="#5c5c5a" stroke="#8a8a88"/>
<rect x="362" y="1011" width="58" height="38" fill="#8a8a88" stroke="#d8d8d8"/>
<g fill="#fff"><path d="M11 1019.500l12-1.700v11.700h-12zM24.500 1017.600l12.500-1.700v13.600h-12.500zM11 1031h12v11.800l-12-1.700zM24.500 1031h12.500v13.400l-12.500-1.700z"/></g>
<!-- IE -->
<circle cx="81" cy="1031" r="12" fill="#2fb3ea"/><text class="m" x="81" y="1041" style="font-size:30px;font-weight:bold;fill:#e9f8ff">e</text>
<ellipse cx="81" cy="1030" rx="17" ry="7" transform="rotate(-38 81 1030)" fill="none" stroke="#f4c017" stroke-width="2"/>
<!-- explorer -->
<path d="M128 1018h12l3 3h12v23h-27z" fill="#f6e3a0" stroke="#a88a40"/><path d="M128 1026h27v18h-27z" fill="#fbeec2" stroke="#c2a55a"/><rect x="132" y="1034" width="19" height="10" fill="#4fb3e6"/><rect x="137" y="1038" width="9" height="6" fill="#dff2fb"/><rect x="131" y="1019" width="3" height="2" fill="#3ec13e"/><rect x="140" y="1020" width="3" height="2" fill="#d33"/>
<!-- firefox -->
<circle cx="205" cy="1031" r="14" fill="#28559c"/><path d="M205 1017a14 14 0 1 1-14 14c2 5 6 9 12 9 6 0 10-4 10-9 0-4-3-7-6-7 1-3 0-5-2-7z" fill="#ef6a1f"/><path d="M194 1024c2-4 6-7 11-7-1 3-4 5-7 7z" fill="#f7a51e"/>
<!-- thunderbird -->
<circle cx="267" cy="1030" r="14" fill="#1d4f8c"/><path d="M256 1028l11 8 13-10c-3-6-7-9-13-10 2 3 2 5 0 8-3 0-8 1-11 4z" fill="#3f8ed6"/><path d="M255 1031l13-6 10 7-2 8h-19z" fill="#f4f4f4" stroke="#667"/>
<!-- chrome -->
<circle cx="329" cy="1031" r="14" fill="#ddb21f"/>
<path d="M329 1031l12.100-7a14 14 0 0 0-24.200 0z" fill="#d9372b"/>
<path d="M329 1031l-12.100-7a14 14 0 0 0 12.100 21z" fill="#2da44a"/>
<circle cx="329" cy="1031" r="6.500" fill="#4a85ee" stroke="#f0f0f0" stroke-width="2"/>
<!-- SW -->
<path d="M375 1021l16-7 17 6v21l-16 7-17-7z" fill="#d92a25" stroke="#7e0d0d"/>
<text x="378" y="1036" style="font-size:14px;font-weight:bold;fill:#fff">S</text><text x="391" y="1032" style="font-size:14px;font-weight:bold;fill:#fff">W</text>
<text x="382" y="1048" style="font-size:11px;font-weight:bold;fill:#fff">2015</text>
<!-- tray -->
<path d="M1420 1033l4-4 4 4z" fill="#eee"/>
<rect x="1441.500" y="1023.500" width="15" height="15" fill="#eef" stroke="#111"/><text class="m" x="1449" y="1036" style="font-size:15px;font-weight:bold;fill:#141a8a">ti</text><circle cx="1454" cy="1025" r="2" fill="#2ad02a"/>
<g fill="#7fd13a"><circle cx="1472" cy="1024" r="3"/><circle cx="1472" cy="1037" r="3"/><circle cx="1465.500" cy="1030.500" r="3"/><circle cx="1478.500" cy="1030.500" r="3"/><circle cx="1467" cy="1026" r="3"/><circle cx="1477" cy="1026" r="3"/><circle cx="1467" cy="1035" r="3"/><circle cx="1477" cy="1035" r="3"/></g><circle cx="1472" cy="1030.500" r="2" fill="#f0e84a"/>
<path d="M1491 1026l4-3 4 3 4-3 4 3-4 3 4 3-4 3-4-3-4 3-4-3 4-3z" fill="#e8e8e8"/><circle cx="1500" cy="1037" r="3.500" fill="#23a53c"/>
<rect x="1518.500" y="1025" width="14" height="10" fill="none" stroke="#eee"/><path d="M1525 1035v3M1521 1039h8" stroke="#eee"/><rect x="1514" y="1024" width="5" height="5" fill="none" stroke="#eee"/><path d="M1516.500 1029v9" stroke="#eee"/>
<path d="M1538 1028h3l4-4v14l-4-4h-3z" fill="#eee"/><path d="M1548 1027a5 5 0 0 1 0 8M1551 1025a8 8 0 0 1 0 12" fill="none" stroke="#bbb"/>
<text class="m w" x="1579" y="1035" style="font-size:12.500px">РУС</text>
<text class="m w" x="1634" y="1027" style="font-size:12.500px">10:48</text>
<text class="m w" x="1633" y="1045" style="font-size:12.500px">29.09.2016</text>
</svg>
</body></html>
